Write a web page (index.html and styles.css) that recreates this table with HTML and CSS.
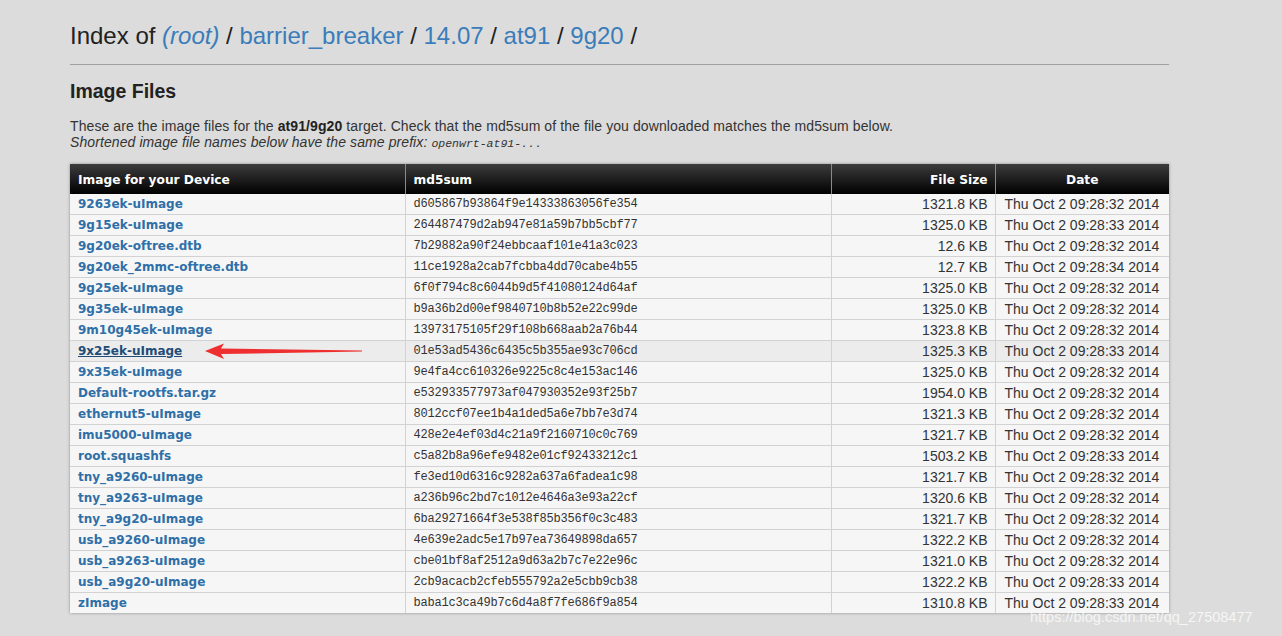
FILE: index.html
```html
<!DOCTYPE html>
<html>
<head>
<meta charset="utf-8">
<link rel="stylesheet" href="styles.css">
</head>
<body>
<div class="page">
  <h1>Index of <a href="#" class="root">(root)</a> / <a href="#">barrier_breaker</a> / <a href="#">14.07</a> / <a href="#">at91</a> / <a href="#">9g20</a> /</h1>
  <hr class="rule">
  <h2>Image Files</h2>
  <p class="intro">These are the image files for the <strong>at91/9g20</strong> target. Check that the md5sum of the file you downloaded matches the md5sum below.<br>
  <em>Shortened image file names below have the same prefix: <code>openwrt-at91-...</code></em></p>
  <table class="files">
    <colgroup><col class="c1"><col class="c2"><col class="c3"><col class="c4"></colgroup>
    <thead>
      <tr><th class="name">Image for your Device</th><th class="sum">md5sum</th><th class="size">File Size</th><th class="date">Date</th></tr>
    </thead>
    <tbody>
      <tr><td class="name"><a href="#">9263ek-uImage</a></td><td class="sum">d605867b93864f9e14333863056fe354</td><td class="size">1321.8 KB</td><td class="date">Thu Oct 2 09:28:32 2014</td></tr>
      <tr><td class="name"><a href="#">9g15ek-uImage</a></td><td class="sum">264487479d2ab947e81a59b7bb5cbf77</td><td class="size">1325.0 KB</td><td class="date">Thu Oct 2 09:28:33 2014</td></tr>
      <tr><td class="name"><a href="#">9g20ek-oftree.dtb</a></td><td class="sum">7b29882a90f24ebbcaaf101e41a3c023</td><td class="size">12.6 KB</td><td class="date">Thu Oct 2 09:28:32 2014</td></tr>
      <tr><td class="name"><a href="#">9g20ek_2mmc-oftree.dtb</a></td><td class="sum">11ce1928a2cab7fcbba4dd70cabe4b55</td><td class="size">12.7 KB</td><td class="date">Thu Oct 2 09:28:34 2014</td></tr>
      <tr><td class="name"><a href="#">9g25ek-uImage</a></td><td class="sum">6f0f794c8c6044b9d5f41080124d64af</td><td class="size">1325.0 KB</td><td class="date">Thu Oct 2 09:28:32 2014</td></tr>
      <tr><td class="name"><a href="#">9g35ek-uImage</a></td><td class="sum">b9a36b2d00ef9840710b8b52e22c99de</td><td class="size">1325.0 KB</td><td class="date">Thu Oct 2 09:28:32 2014</td></tr>
      <tr><td class="name"><a href="#">9m10g45ek-uImage</a></td><td class="sum">13973175105f29f108b668aab2a76b44</td><td class="size">1323.8 KB</td><td class="date">Thu Oct 2 09:28:32 2014</td></tr>
      <tr class="hover"><td class="name"><a href="#">9x25ek-uImage</a><span class="arrow"><svg width="160" height="17" viewBox="0 0 160 17"><polygon points="0,8 19,0.5 16,5.5 157,7.6 157,8.6 16,11 19,16" fill="#ef2f2f"/></svg></span></td><td class="sum">01e53ad5436c6435c5b355ae93c706cd</td><td class="size">1325.3 KB</td><td class="date">Thu Oct 2 09:28:33 2014</td></tr>
      <tr><td class="name"><a href="#">9x35ek-uImage</a></td><td class="sum">9e4fa4cc610326e9225c8c4e153ac146</td><td class="size">1325.0 KB</td><td class="date">Thu Oct 2 09:28:32 2014</td></tr>
      <tr><td class="name"><a href="#">Default-rootfs.tar.gz</a></td><td class="sum">e532933577973af047930352e93f25b7</td><td class="size">1954.0 KB</td><td class="date">Thu Oct 2 09:28:32 2014</td></tr>
      <tr><td class="name"><a href="#">ethernut5-uImage</a></td><td class="sum">8012ccf07ee1b4a1ded5a6e7bb7e3d74</td><td class="size">1321.3 KB</td><td class="date">Thu Oct 2 09:28:32 2014</td></tr>
      <tr><td class="name"><a href="#">imu5000-uImage</a></td><td class="sum">428e2e4ef03d4c21a9f2160710c0c769</td><td class="size">1321.7 KB</td><td class="date">Thu Oct 2 09:28:32 2014</td></tr>
      <tr><td class="name"><a href="#">root.squashfs</a></td><td class="sum">c5a82b8a96efe9482e01cf92433212c1</td><td class="size">1503.2 KB</td><td class="date">Thu Oct 2 09:28:33 2014</td></tr>
      <tr><td class="name"><a href="#">tny_a9260-uImage</a></td><td class="sum">fe3ed10d6316c9282a637a6fadea1c98</td><td class="size">1321.7 KB</td><td class="date">Thu Oct 2 09:28:32 2014</td></tr>
      <tr><td class="name"><a href="#">tny_a9263-uImage</a></td><td class="sum">a236b96c2bd7c1012e4646a3e93a22cf</td><td class="size">1320.6 KB</td><td class="date">Thu Oct 2 09:28:32 2014</td></tr>
      <tr><td class="name"><a href="#">tny_a9g20-uImage</a></td><td class="sum">6ba29271664f3e538f85b356f0c3c483</td><td class="size">1321.7 KB</td><td class="date">Thu Oct 2 09:28:32 2014</td></tr>
      <tr><td class="name"><a href="#">usb_a9260-uImage</a></td><td class="sum">4e639e2adc5e17b97ea73649898da657</td><td class="size">1322.2 KB</td><td class="date">Thu Oct 2 09:28:32 2014</td></tr>
      <tr><td class="name"><a href="#">usb_a9263-uImage</a></td><td class="sum">cbe01bf8af2512a9d63a2b7c7e22e96c</td><td class="size">1321.0 KB</td><td class="date">Thu Oct 2 09:28:32 2014</td></tr>
      <tr><td class="name"><a href="#">usb_a9g20-uImage</a></td><td class="sum">2cb9acacb2cfeb555792a2e5cbb9cb38</td><td class="size">1322.2 KB</td><td class="date">Thu Oct 2 09:28:33 2014</td></tr>
      <tr><td class="name"><a href="#">zImage</a></td><td class="sum">baba1c3ca49b7c6d4a8f7fe686f9a854</td><td class="size">1310.8 KB</td><td class="date">Thu Oct 2 09:28:33 2014</td></tr>
    </tbody>
  </table>
</div>
<div class="watermark">https://blog.csdn.net/qq_27508477</div>
</body>
</html>
```
FILE: styles.css
```css
html, body {
  margin: 0;
  padding: 0;
  background: #dcdcdc;
  height: 100%;
  overflow: hidden;
}
body {
  font-family: "Liberation Sans", Arial, sans-serif;
  color: #333;
  position: relative;
}
.page {
  width: 1099px;
  margin-left: 70px;
  padding-top: 21px;
}
a {
  color: #2f6fa7;
  text-decoration: none;
}
h1 {
  margin: 0;
  font-size: 24px;
  line-height: 30px;
  font-weight: normal;
  color: #222;
}
h1 a { color: #3a7dba; }
h1 .root { font-style: italic; }
.rule {
  margin: 13px 0 0;
  border: 0;
  height: 1px;
  background: #a0a0a0;
}
h2 {
  margin: 14px 0 0;
  font-size: 19.5px;
  line-height: 24px;
  font-weight: bold;
  color: #222;
}
.intro {
  margin: 15px 0 0;
  font-size: 14px;
  letter-spacing: 0.09px;
  line-height: 16px;
  color: #333;
}
.intro strong { color: #222; }
.intro code {
  font-family: "Liberation Mono", monospace;
  font-size: 11.5px;
  letter-spacing: 0;
}
.files {
  margin-top: 12px;
  width: 1099px;
  border-collapse: collapse;
  table-layout: fixed;
  box-shadow: 0 0 3px rgba(0,0,0,0.35);
  background: #f6f6f6;
}
.c1 { width: 335px; }
.c2 { width: 426px; }
.c3 { width: 164px; }
.c4 { width: 174px; }
.files th {
  height: 28px;
  padding: 2px 8px 0;
  background: linear-gradient(#3c3c3c, #000 100%);
  color: #fff;
  font-family: "DejaVu Sans", Verdana, sans-serif;
  font-size: 12.2px;
  font-weight: bold;
  border-left: 1px solid #8a8a8a;
  text-align: left;
}
.files th:first-child { border-left: 0; }
.files th.size { text-align: right; padding-right: 7px; }
.files th.date { text-align: center; }
.files td {
  height: 20px;
  padding: 0 8px;
  border-top: 1px solid #d2d2d2;
  border-left: 1px solid #d2d2d2;
  font-size: 14px;
  color: #333;
  white-space: nowrap;
  overflow: visible;
}
.files tbody tr:first-child td { border-top: 0; }
.files td:first-child { border-left: 0; }
.files td.name {
  font-family: "DejaVu Sans", Verdana, sans-serif;
  font-size: 12px;
  font-weight: bold;
  position: relative;
}
.files td.sum {
  font-family: "Liberation Mono", monospace;
  font-size: 12px;
  letter-spacing: -0.2px;
  color: #333;
}
.files td.size { text-align: right; padding-right: 7px; }
.files td.date { padding-left: 9px; }
.files tr.hover td { background: #ececec; }
.files tr.hover a {
  color: #1f4d78;
  text-decoration: underline;
}
.arrow {
  position: absolute;
  left: 135px;
  top: 2px;
  line-height: 0;
}
.watermark {
  position: absolute;
  left: 1030px;
  top: 609px;
  font-size: 14.5px;
  line-height: 17px;
  color: rgba(255,255,255,0.75);
  white-space: nowrap;
}
```
